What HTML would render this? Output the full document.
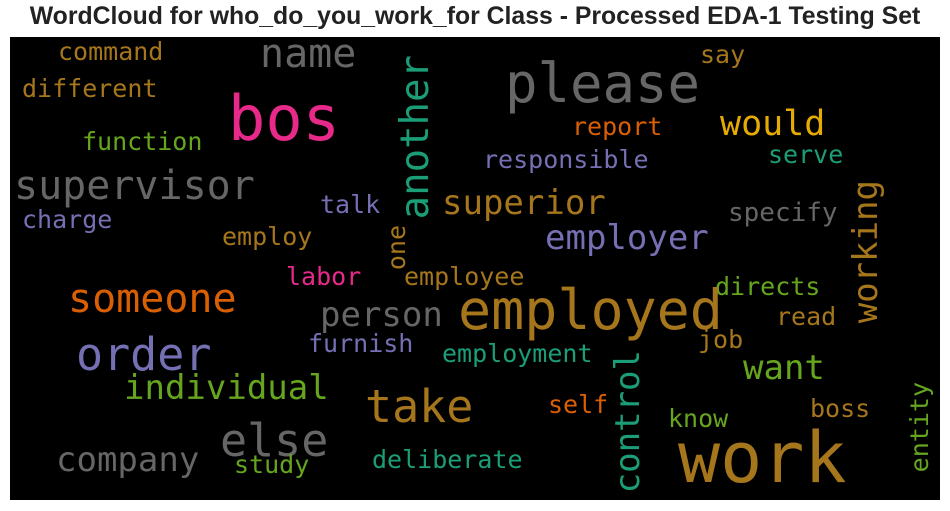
<!DOCTYPE html>
<html><head><meta charset="utf-8">
<style>
html,body{margin:0;padding:0;background:#fff;width:950px;height:511px;overflow:hidden}
.t{position:absolute;top:3px;left:0;width:950px;text-align:center;font:bold 24.8px "Liberation Sans",Arial,sans-serif;color:#222}
.bg{position:absolute;left:10px;top:37px;width:930px;height:463px;background:#000}
.w{position:absolute;font-family:"DejaVu Sans Mono",monospace;line-height:1;white-space:nowrap}
.v{writing-mode:vertical-rl;transform:rotate(180deg)}
.g{color:#a6761d}.p{color:#e7298a}.y{color:#666}.u{color:#7570b3}.c{color:#1b9e77}.n{color:#66a61e}.o{color:#d95f02}.k{color:#e6ab02}
</style></head><body>
<div class="t">WordCloud for who_do_you_work_for Class - Processed EDA-1 Testing Set</div>
<div class="bg"></div>
<div class="w g" style="left:58px;top:39px;font-size:25px">command</div>
<div class="w y" style="left:260px;top:34px;font-size:40px">name</div>
<div class="w y" style="left:505px;top:57px;font-size:54px">please</div>
<div class="w g" style="left:700px;top:42px;font-size:25px">say</div>
<div class="w g" style="left:22px;top:76px;font-size:25px">different</div>
<div class="w p" style="left:228px;top:88px;font-size:62px">bos</div>
<div class="w c v" style="left:396px;top:55px;font-size:39px">another</div>
<div class="w o" style="left:572px;top:114px;font-size:25px">report</div>
<div class="w k" style="left:720px;top:107px;font-size:35px">would</div>
<div class="w n" style="left:82px;top:129px;font-size:25px">function</div>
<div class="w u" style="left:483px;top:147px;font-size:25px">responsible</div>
<div class="w c" style="left:768px;top:142px;font-size:25px">serve</div>
<div class="w y" style="left:14px;top:166px;font-size:40px">supervisor</div>
<div class="w g v" style="left:849px;top:180px;font-size:34px">working</div>
<div class="w g" style="left:442px;top:186px;font-size:34px">superior</div>
<div class="w u" style="left:320px;top:192px;font-size:25px">talk</div>
<div class="w y" style="left:728px;top:200px;font-size:26px">specify</div>
<div class="w u" style="left:22px;top:207px;font-size:25px">charge</div>
<div class="w u" style="left:545px;top:221px;font-size:34px">employer</div>
<div class="w g" style="left:222px;top:224px;font-size:25px">employ</div>
<div class="w g v" style="left:384px;top:225px;font-size:25px">one</div>
<div class="w p" style="left:286px;top:264px;font-size:25px">labor</div>
<div class="w g" style="left:404px;top:264px;font-size:25px">employee</div>
<div class="w n" style="left:715px;top:274px;font-size:25px">directs</div>
<div class="w o" style="left:68px;top:279px;font-size:40px">someone</div>
<div class="w g" style="left:458px;top:283px;font-size:55px">employed</div>
<div class="w y" style="left:320px;top:298px;font-size:34px">person</div>
<div class="w g" style="left:776px;top:304px;font-size:25px">read</div>
<div class="w u" style="left:76px;top:332px;font-size:45px">order</div>
<div class="w u" style="left:308px;top:331px;font-size:25px">furnish</div>
<div class="w c" style="left:442px;top:341px;font-size:25px">employment</div>
<div class="w g" style="left:698px;top:327px;font-size:25px">job</div>
<div class="w c v" style="left:611px;top:350px;font-size:34px">control</div>
<div class="w n" style="left:743px;top:351px;font-size:34px">want</div>
<div class="w n" style="left:124px;top:371px;font-size:34px">individual</div>
<div class="w n v" style="left:907px;top:382px;font-size:25px">entity</div>
<div class="w g" style="left:365px;top:384px;font-size:45px">take</div>
<div class="w o" style="left:548px;top:392px;font-size:25px">self</div>
<div class="w g" style="left:810px;top:396px;font-size:25px">boss</div>
<div class="w n" style="left:668px;top:406px;font-size:25px">know</div>
<div class="w y" style="left:220px;top:418px;font-size:45px">else</div>
<div class="w y" style="left:56px;top:443px;font-size:34px">company</div>
<div class="w n" style="left:234px;top:452px;font-size:25px">study</div>
<div class="w c" style="left:372px;top:447px;font-size:25px">deliberate</div>
<div class="w g" style="left:678px;top:423px;font-size:70px">work</div>
</body></html>
